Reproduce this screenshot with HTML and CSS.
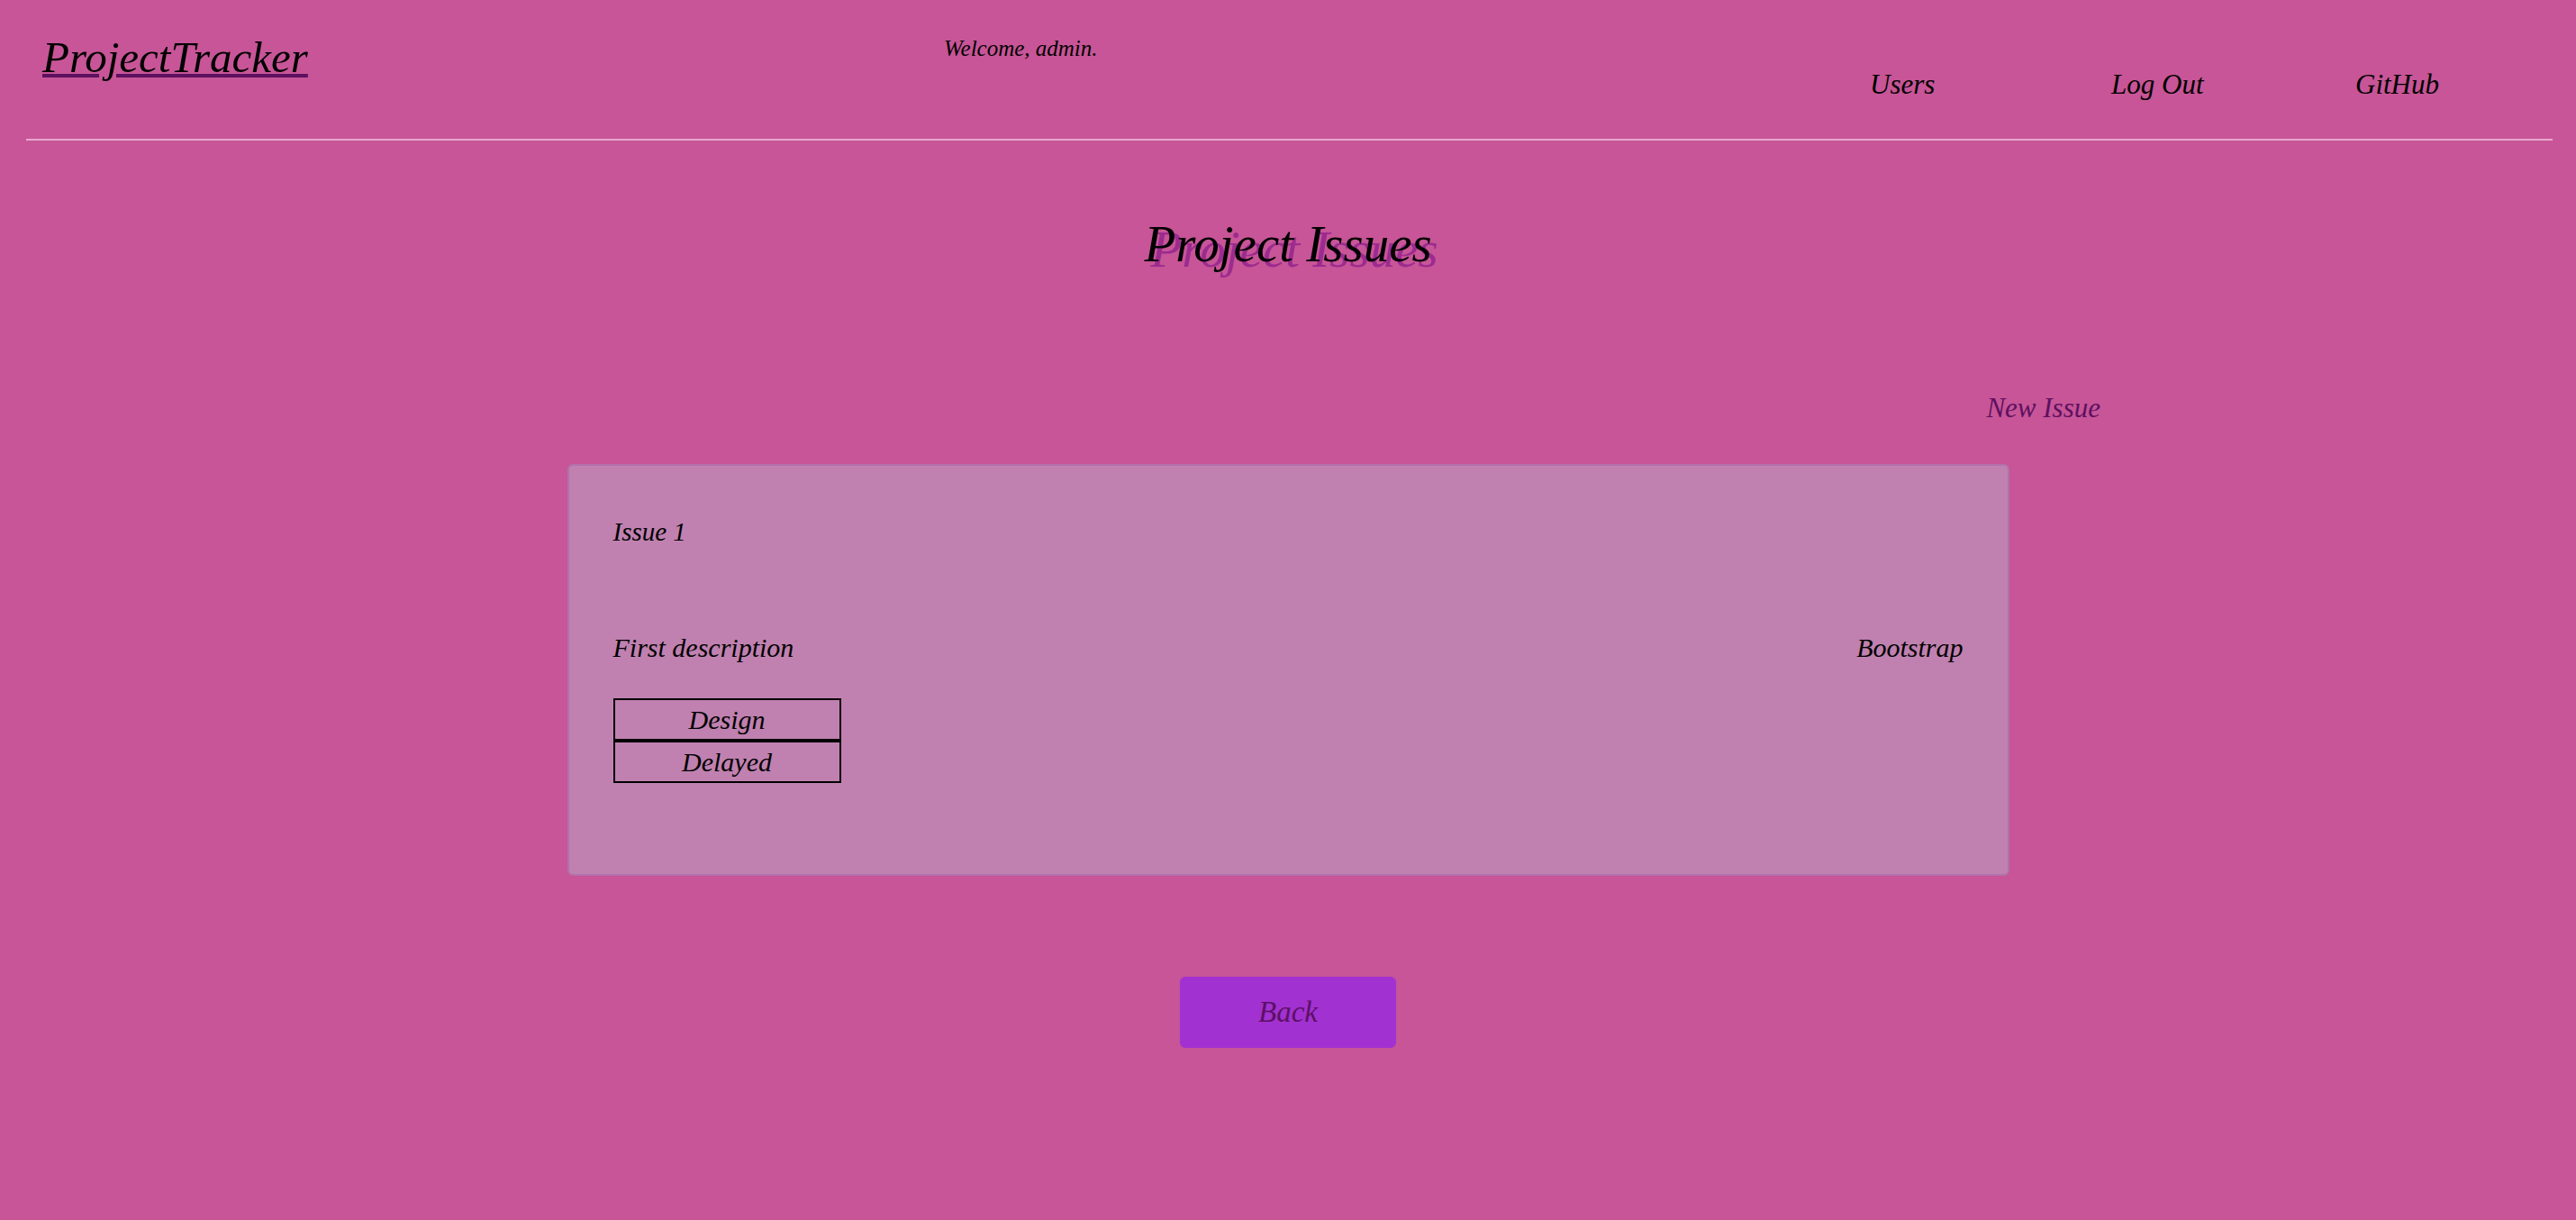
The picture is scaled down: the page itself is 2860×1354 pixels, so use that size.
FILE: index.html
```html
<!DOCTYPE html>
<html lang="en">
<head>
<meta charset="utf-8">
<title>ProjectTracker - Project Issues</title>
<link rel="stylesheet" href="styles.css">
</head>
<body>
<header class="site-header">
  <a class="brand" href="#">ProjectTracker</a>
  <div class="welcome">Welcome, admin.</div>
  <nav class="nav">
    <a class="nav-link" href="#">Users</a>
    <a class="nav-link" href="#">Log Out</a>
    <a class="nav-link" href="#">GitHub</a>
  </nav>
</header>
<hr class="rule">
<main class="main">
  <h1 class="page-title">Project Issues</h1>
  <div class="toolbar">
    <a class="new-issue" href="#">New Issue</a>
  </div>
  <section class="issue-card">
    <div class="issue-title">Issue 1</div>
    <div class="issue-row">
      <div class="issue-desc">First description</div>
      <div class="issue-project">Bootstrap</div>
    </div>
    <div class="tags">
      <div class="tag">Design</div>
      <div class="tag">Delayed</div>
    </div>
  </section>
  <div class="actions">
    <a class="btn-back" href="#">Back</a>
  </div>
</main>
</body>
</html>
```
FILE: styles.css
```css
html, body {
  margin: 0;
  padding: 0;
}
body {
  background: #c75597;
  font-family: "Liberation Serif", "Times New Roman", serif;
  font-style: italic;
  color: #000;
}
a {
  color: inherit;
  text-decoration: none;
}

/* header */
.site-header {
  display: grid;
  grid-template-columns: 1001px 1028px 1fr;
  align-items: start;
  padding: 39px 0 45px 47px;
}
.brand {
  font-size: 49px;
  line-height: 49px;
  text-decoration: underline;
  text-decoration-color: #5e1060;
  text-decoration-thickness: 4px;
  text-underline-offset: 2px;
  justify-self: start;
}
.welcome {
  font-size: 25px;
  line-height: 25px;
  margin-top: 2px;
}
.nav {
  display: grid;
  grid-template-columns: 268px 271px auto;
  margin-top: 39px;
}
.nav-link {
  font-size: 31px;
  line-height: 31px;
}
.rule {
  border: 0;
  height: 2px;
  margin: 0 26px 0 29px;
  background: #e8a7d0;
}

/* main */
.main {
  display: flex;
  flex-direction: column;
  align-items: center;
}
.page-title {
  margin: 86px 0 0;
  font-size: 57px;
  line-height: 57px;
  font-weight: normal;
  text-shadow: 7px 6px 0 #9c2b8f;
}
.toolbar {
  width: 1804px;
  margin-top: 138px;
  text-align: right;
  line-height: 31px;
}
.new-issue {
  font-size: 31px;
  line-height: 31px;
  color: #5e1060;
  display: inline-block;
  vertical-align: top;
}
.issue-card {
  box-sizing: border-box;
  width: 1601px;
  margin-top: 47px;
  padding: 59px 49px 101px;
  background: #c081b0;
  border: 2px solid #b271ab;
  border-radius: 6px;
}
.issue-title {
  font-size: 29px;
  line-height: 29px;
}
.issue-row {
  display: flex;
  justify-content: space-between;
  align-items: baseline;
  margin-top: 99px;
  font-size: 30px;
  line-height: 30px;
}
.tags {
  margin-top: 41px;
  width: 253px;
}
.tag {
  border: 2px solid #000;
  height: 43px;
  line-height: 43px;
  font-size: 30px;
  text-align: center;
}
.actions {
  margin-top: 112px;
}
.btn-back {
  display: block;
  width: 240px;
  height: 79px;
  line-height: 79px;
  text-align: center;
  font-size: 33px;
  color: #5c1066;
  background: #a231d1;
  border-radius: 6px;
}
```
